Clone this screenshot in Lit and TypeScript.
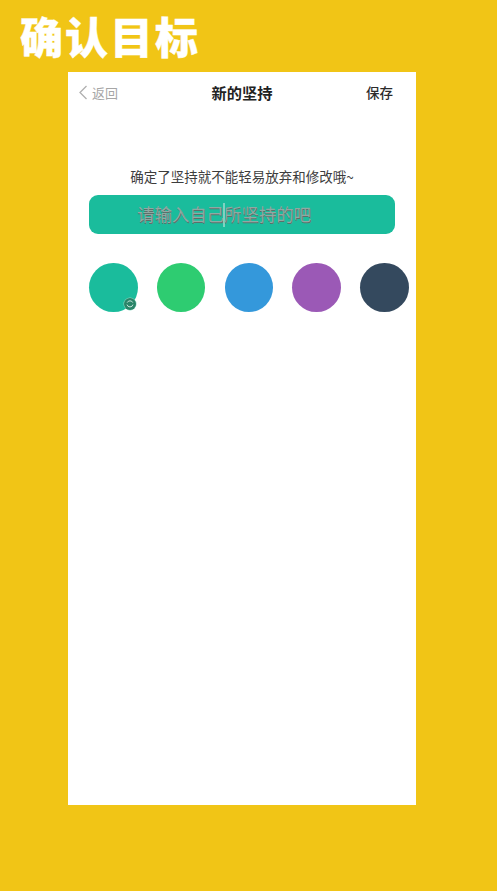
import { LitElement, html, css } from "lit";
import { customElement } from "lit/decorators.js";

const COLORS = ["#1abc9c", "#2ecc71", "#3498db", "#9b59b6", "#34495e"];

@customElement("app-root")
export class AppRoot extends LitElement {
  static styles = css`
    :host {
      display: block;
      width: 497px;
      height: 891px;
      overflow: hidden;
      background: #f1c516;
      font-family: "Liberation Sans", "Noto Sans CJK SC", sans-serif;
    }
    .banner {
      height: 72px;
      box-sizing: border-box;
      padding: 6px 0 0 20px;
      color: #fff;
      font-family: "Noto Sans CJK SC", sans-serif;
      font-size: 43px;
      line-height: 58px;
      font-weight: 900;
      letter-spacing: 2px;
      -webkit-text-stroke: 0.4px #fff;
    }
    .phone {
      width: 348px;
      height: 733px;
      margin-left: 68px;
      background: #fff;
      box-sizing: border-box;
      padding: 0 21px;
      font-family: "Noto Sans CJK SC", sans-serif;
    }
    .nav {
      height: 40px;
      padding-bottom: 4px;
      margin: 0 -21px;
      padding-left: 23px;
      padding-right: 23px;
      display: grid;
      grid-template-columns: 1fr auto 1fr;
      align-items: center;
    }
    .back {
      display: flex;
      align-items: center;
      gap: 5px;
      margin-left: -12px;
      color: #a6a6a6;
      font-size: 13px;
    }
    .back svg { display: block; }
    .title {
      color: #222;
      font-size: 15.25px;
      font-weight: 700;
    }
    .save {
      justify-self: end;
      color: #2b2b2b;
      font-size: 13.5px;
      font-weight: 500;
    }
    .hint {
      margin-top: 49px;
      height: 22px;
      line-height: 22px;
      text-align: center;
      color: #3d3d3d;
      font-size: 13.5px;
      white-space: nowrap;
    }
    .field {
      margin-top: 8px;
      height: 39px;
      box-sizing: border-box;
      border-radius: 9px;
      background: #1abc9c;
      padding: 0 0 2px 48px;
      display: flex;
      align-items: center;
      color: #8fa9a3;
      font-size: 17.4px;
      white-space: nowrap;
      text-shadow: 0.6px 0.6px 0.4px #5c6f6a;
    }
    .caret {
      width: 1.5px;
      height: 24px;
      margin: 2px -0.75px 0;
      background: #7fd2c1;
    }
    .swatches {
      margin-top: 29px;
      display: flex;
      gap: 19.3px;
    }
    .swatch {
      position: relative;
      flex: none;
      width: 48.5px;
      height: 49px;
      border-radius: 50%;
    }
    .badge {
      position: absolute;
      right: 2px;
      bottom: 2px;
      width: 12px;
      height: 12px;
      border-radius: 50%;
      background: #2a8468;
      box-shadow: 0 0 0 0.5px #8fd8c4;
    }
    .badge svg { display: block; }
  `;

  render() {
    return html`
      <div class="banner">确认目标</div>
      <div class="phone">
        <div class="nav">
          <div class="back">
            <svg width="8" height="15" viewBox="0 0 8 15" fill="none">
              <path d="M7.5 1 L1 7.5 L7.5 14" stroke="#b0b0b0" stroke-width="1.3" />
            </svg>
            <span>返回</span>
          </div>
          <div class="title">新的坚持</div>
          <div class="save">保存</div>
        </div>
        <div class="hint">确定了坚持就不能轻易放弃和修改哦~</div>
        <div class="field">
          <span>请输入自己</span><i class="caret"></i><span>所坚持的吧</span>
        </div>
        <div class="swatches">
          ${COLORS.map(
            (c, i) => html`
              <div class="swatch" style="background:${c}">
                ${i === 0
                  ? html`<div class="badge">
                      <svg width="12" height="12" viewBox="0 0 12 12" fill="none">
                        <path
                          d="M3 6.6 A3.1 3.1 0 0 0 9 6.6 M3.2 4.6 A3.1 3.1 0 0 1 8.8 4.6"
                          stroke="#d5efe6"
                          stroke-width="0.9"
                        />
                      </svg>
                    </div>`
                  : ""}
              </div>
            `
          )}
        </div>
      </div>
    `;
  }
}
